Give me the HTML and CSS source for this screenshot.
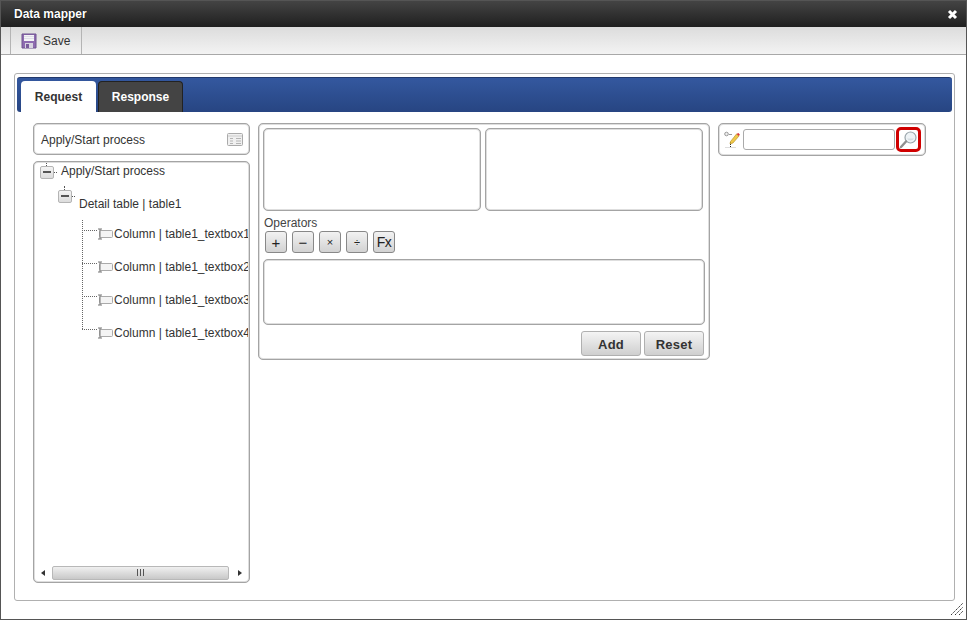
FILE: index.html
```html
<!DOCTYPE html>
<html lang="en">
<head>
<meta charset="utf-8">
<title>Data mapper</title>
<link rel="stylesheet" href="styles.css">
</head>
<body>
<div class="window">
  <header class="titlebar">
    <span class="title">Data mapper</span>
    <svg class="close" width="11" height="11" viewBox="0 0 11 11"><path d="M2 2 L9 9 M9 2 L2 9" stroke="#fff" stroke-width="3"/></svg>
  </header>
  <div class="toolbar">
    <div class="save">
      <svg width="16" height="16" viewBox="0 0 16 16"><path d="M1 1h14v14H1z" fill="#8e6bb0" stroke="#6f5590" stroke-width="1"/><path d="M3 2h10v6H3z" fill="#f4f4f6"/><path d="M3 3.500h10M3 5.500h10" stroke="#ccd" stroke-width=".6"/><path d="M4 10h8v5H4z" fill="#d8d4e0"/><path d="M5 11h3v4H5z" fill="#7a5c9c"/></svg>
      <span>Save</span>
    </div>
  </div>
  <main class="body">
    <section class="panel">
      <div class="tabbar">
        <div class="tab active">Request</div>
        <div class="tab dark">Response</div>
      </div>
      <div class="columns">
        <div class="col-left">
          <div class="box head">
            <span class="head-text">Apply/Start process</span>
            <svg width="16" height="13" viewBox="0 0 16 13"><rect x=".5" y=".5" width="15" height="12" rx="1" fill="#f0f0f0" stroke="#aaa"/><path d="M1 3h14" stroke="#ccc"/><path d="M3 5.500h3M9 5.500h5M3 8h3M9 8h5M3 10.500h3M9 10.500h5" stroke="#b4b4b4"/></svg>
          </div>
          <div class="box tree">
            <div class="node root">
              <span class="toggle"></span><span class="label">Apply/Start process</span>
            </div>
            <div class="node sub">
              <span class="toggle"></span><span class="label">Detail table | table1</span>
            </div>
            <div class="leaves">
              <div class="leaf"><svg class="fld" width="17" height="12" viewBox="0 0 17 12"><rect x="2.500" y="2.500" width="13" height="7" rx="1" fill="#f4f4f4" stroke="#aaa"/><path d="M1 1h4M3 1v10M1 11h4" stroke="#777" fill="none"/></svg><span>Column | table1_textbox1</span></div>
              <div class="leaf"><svg class="fld" width="17" height="12" viewBox="0 0 17 12"><rect x="2.500" y="2.500" width="13" height="7" rx="1" fill="#f4f4f4" stroke="#aaa"/><path d="M1 1h4M3 1v10M1 11h4" stroke="#777" fill="none"/></svg><span>Column | table1_textbox2</span></div>
              <div class="leaf"><svg class="fld" width="17" height="12" viewBox="0 0 17 12"><rect x="2.500" y="2.500" width="13" height="7" rx="1" fill="#f4f4f4" stroke="#aaa"/><path d="M1 1h4M3 1v10M1 11h4" stroke="#777" fill="none"/></svg><span>Column | table1_textbox3</span></div>
              <div class="leaf"><svg class="fld" width="17" height="12" viewBox="0 0 17 12"><rect x="2.500" y="2.500" width="13" height="7" rx="1" fill="#f4f4f4" stroke="#aaa"/><path d="M1 1h4M3 1v10M1 11h4" stroke="#777" fill="none"/></svg><span>Column | table1_textbox4</span></div>
            </div>
            <div class="hscroll">
              <svg width="17" height="14" viewBox="0 0 17 14"><path d="M10 4v6L6 7z" fill="#333"/></svg>
              <div class="thumb"><svg width="9" height="7" viewBox="0 0 9 7"><path d="M1.500 0v7M4.500 0v7M7.500 0v7" stroke="#555"/></svg></div>
              <svg width="19" height="14" viewBox="0 0 19 14"><path d="M9 4v6l4-3z" fill="#333"/></svg>
            </div>
          </div>
        </div>
        <div class="box col-mid">
          <div class="pair">
            <div class="well"></div>
            <div class="well"></div>
          </div>
          <div class="op-label">Operators</div>
          <div class="ops">
            <button class="op big">+</button>
            <button class="op big">−</button>
            <button class="op">×</button>
            <button class="op">÷</button>
            <button class="op fx">Fx</button>
          </div>
          <div class="well expr"></div>
          <div class="actions">
            <button class="act">Add</button>
            <button class="act">Reset</button>
          </div>
        </div>
        <div class="box col-right">
          <svg class="pencil" width="17" height="17" viewBox="0 0 17 17"><circle cx="2.500" cy="3" r="1.800" fill="#eee" stroke="#999"/><path d="M5 3.500h3" stroke="#999"/><path d="M6.500 16V11" stroke="#222" stroke-dasharray="1 1"/><path d="M6.500 10.500 12.500 3l2.500 2-6 7-3 1z" fill="#f0c94a" stroke="#b08a20" stroke-width=".6"/><path d="M12.500 3l2.500 2 .8-1.500-1.500-1.500z" fill="#d33"/><path d="M1 16.500h11" stroke="#ddd"/></svg>
          <div class="search"></div>
          <div class="find">
            <svg width="19" height="19" viewBox="0 0 19 19"><circle cx="11.500" cy="7.500" r="5.500" fill="#eef3f6" stroke="#9aa5ab" stroke-width="1.200"/><path d="M8 8.500a4 4 0 0 0 7 0" fill="#d5dee3"/><path d="M7 11.500 2 17" stroke="#8f8f8f" stroke-width="2.400" stroke-linecap="round"/></svg>
          </div>
        </div>
      </div>
    </section>
    <svg class="grip" width="12" height="12" viewBox="0 0 12 12"><path d="M0 12 12 0M4 12l8-8M8 12l4-4" stroke="#333" stroke-dasharray="1.500 .8" fill="none"/></svg>
  </main>
</div>
</body>
</html>
```
FILE: styles.css
```css
* { box-sizing: border-box; }
html, body { margin: 0; padding: 0; }
body {
  width: 967px;
  height: 620px;
  overflow: hidden;
  background: #fff;
  font-family: "Liberation Sans", Arial, sans-serif;
  font-size: 12px;
  color: #333;
}
.window {
  width: 967px;
  height: 620px;
  display: flex;
  flex-direction: column;
  border: 1px solid #555;
  background: #fff;
}
.titlebar {
  height: 26px;
  flex: none;
  display: flex;
  align-items: center;
  justify-content: space-between;
  padding: 0 8px 0 13px;
  background: linear-gradient(#444, #1f1f1f);
  color: #fff;
  font-weight: bold;
}
.title { text-shadow: 0 0 1px #000; margin-top: -1px; }
.toolbar {
  height: 28px;
  flex: none;
  display: flex;
  padding-left: 9px;
  background: linear-gradient(#dcdcdc, #f3f3f3);
  border-bottom: 1px solid #a8a8a8;
}
.save {
  width: 72px;
  display: flex;
  align-items: center;
  gap: 6px;
  padding-left: 10px;
  border-left: 1px solid #b4b4b4;
  border-right: 1px solid #b4b4b4;
  color: #333;
}
.save span { margin-top: 1px; }
.save svg { margin-top: 1px; }
.body {
  flex: 1;
  position: relative;
  padding: 18px 11px 18px 13px;
  min-height: 0;
}
.panel {
  width: 941px;
  height: 100%;
  border: 1px solid #b0b0b0;
  border-radius: 3px;
  padding: 3px 2px;
  background: #fff;
}
.tabbar {
  height: 35px;
  display: flex;
  align-items: flex-end;
  gap: 2px;
  padding-left: 4px;
  background: linear-gradient(#34589f, #274582);
  border-radius: 3px;
  border-top: 1px solid #22396b;
}
.tab {
  height: 31px;
  display: flex;
  align-items: center;
  justify-content: center;
  border-radius: 4px 4px 0 0;
  font-weight: bold;
}
.tab.active {
  width: 75px;
  background: #fff;
  color: #333;
}
.tab.dark {
  width: 85px;
  background: #444;
  color: #fff;
  border: 1px solid #222;
  border-bottom: 0;
}
.columns {
  display: flex;
  align-items: flex-start;
  gap: 8px;
  padding: 11px 0 0 16px;
}
.box {
  background: #fff;
  border: 2px solid #dedede;
  border-radius: 5px;
  outline: 1px solid #a4a4a4;
  outline-offset: -1px;
}
.col-left {
  width: 217px;
  flex: none;
  display: flex;
  flex-direction: column;
  gap: 6px;
}
.head {
  height: 32px;
  display: flex;
  align-items: center;
  justify-content: space-between;
  padding: 0 5px 0 6px;
}
.head-text { margin-top: 2px; }
.tree {
  height: 422px;
  position: relative;
  overflow: hidden;
  color: #333;
}
.node {
  position: relative;
  display: flex;
}
.toggle {
  width: 14px;
  height: 13px;
  flex: none;
  border: 1px solid #b4b4b4;
  border-radius: 2px;
  background: linear-gradient(#f4f4f4, #dcdcdc);
  position: relative;
}
.toggle::before {
  content: "";
  position: absolute;
  left: 2px;
  top: 4px;
  width: 8px;
  height: 2px;
  background: #555;
}
.toggle::after {
  content: "";
  position: absolute;
  left: 5px;
  top: -5px;
  height: 4px;
  border-left: 1px dotted #555;
}
.label { line-height: 14px; }
.label::before {
  content: "";
  position: absolute;
  width: 3px;
  border-top: 1px dotted #555;
}
.root { height: 26px; padding: 3px 0 0 5px; }
.root .label { margin: -2px 0 0 7px; }
.root .label::before { left: 19px; top: 9px; }
.sub { height: 34px; padding: 1px 0 0 23px; }
.sub .label { margin: 7px 0 0 7px; }
.sub .label::before { left: 37px; top: 7px; }
.leaves {
  position: relative;
  padding: 1px 0 0 47px;
}
.leaves::before {
  content: "";
  position: absolute;
  left: 47px;
  top: -3px;
  height: 109px;
  border-left: 1px dotted #666;
}
.leaf {
  height: 33px;
  display: flex;
  align-items: flex-start;
  white-space: nowrap;
  padding-top: 3px;
  position: relative;
}
.leaf::before {
  content: "";
  width: 15px;
  flex: none;
  margin-top: 3px;
  border-top: 1px dotted #666;
  height: 1px;
}
.leaf .fld { flex: none; margin-top: 1px; }
.leaf span { line-height: 14px; }
.hscroll {
  position: absolute;
  left: 0;
  right: 0;
  bottom: 1px;
  height: 15px;
  display: flex;
  align-items: center;
}
.hscroll svg { flex: none; }
.thumb {
  flex: 1;
  height: 14px;
  display: flex;
  align-items: center;
  justify-content: center;
  border: 1px solid #b8b8b8;
  border-radius: 2px;
  background: linear-gradient(#f0f0f0, #c8c8c8);
}
.col-mid {
  width: 452px;
  height: 237px;
  flex: none;
  padding: 3px 3px 0 3px;
}
.pair { display: flex; gap: 4px; }
.well {
  width: 218px;
  height: 83px;
  border: 2px solid #dedede;
  border-radius: 5px;
  background: #fff;
  outline: 1px solid #a4a4a4;
  outline-offset: -1px;
}
.op-label { margin: 5px 0 0 1px; line-height: 14px; color: #444; }
.ops { display: flex; gap: 5px; margin: 1px 0 0 2px; }
.op {
  width: 22px;
  height: 22px;
  padding: 0;
  border: 1px solid #888;
  border-radius: 3px;
  background: linear-gradient(#f2f2f2, #d2d2d2);
  font-family: "Liberation Sans", Arial, sans-serif;
  font-size: 11px;
  color: #222;
}
.op.big { font-size: 15px; }
.op.fx { font-size: 14px; letter-spacing: -.5px; }
.expr { width: 442px; height: 66px; margin-top: 6px; }
.actions {
  display: flex;
  justify-content: flex-end;
  gap: 3px;
  margin: 6px 1px 0 0;
}
.act {
  width: 60px;
  height: 25px;
  padding: 2px 0 0;
  border: 1px solid #b0b0b0;
  border-radius: 3px;
  background: linear-gradient(#f4f4f4, #cfcfcf);
  font-family: "Liberation Sans", Arial, sans-serif;
  font-weight: bold;
  font-size: 13px;
  letter-spacing: .2px;
  color: #333;
}
.col-right {
  width: 208px;
  height: 33px;
  flex: none;
  display: flex;
  align-items: center;
  padding-left: 4px;
}
.pencil { flex: none; }
.search {
  width: 152px;
  height: 21px;
  flex: none;
  margin-left: 2px;
  border: 1px solid #aaa;
  border-radius: 3px;
}
.find {
  width: 25px;
  height: 25px;
  flex: none;
  margin-left: 1px;
  display: flex;
  align-items: center;
  justify-content: center;
  border: 3px solid #d00000;
  border-radius: 5px;
  background: #fff;
}
.grip { position: absolute; right: 3px; bottom: 4px; }
```
